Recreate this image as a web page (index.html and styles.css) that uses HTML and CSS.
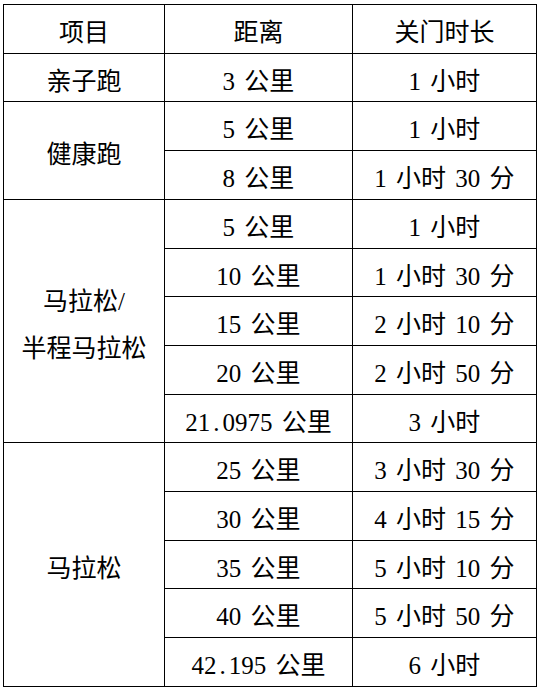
FILE: index.html
```html
<!DOCTYPE html>
<html lang="zh">
<head>
<meta charset="utf-8">
<link rel="stylesheet" href="styles.css">
</head>
<body>
<table class="tbl">
  <colgroup><col class="c1"><col class="c2"><col class="c3"></colgroup>
  <tr><td>项目</td><td>距离</td><td>关门时长</td></tr>
  <tr><td>亲子跑</td><td>3 公里</td><td>1 小时</td></tr>
  <tr><td rowspan="2">健康跑</td><td>5 公里</td><td>1 小时</td></tr>
  <tr><td>8 公里</td><td>1 小时 30 分</td></tr>
  <tr><td rowspan="5" class="two">马拉松/<br>半程马拉松</td><td>5 公里</td><td>1 小时</td></tr>
  <tr><td>10 公里</td><td>1 小时 30 分</td></tr>
  <tr><td>15 公里</td><td>2 小时 10 分</td></tr>
  <tr><td>20 公里</td><td>2 小时 50 分</td></tr>
  <tr><td>21<span class="dot">.</span>0975 公里</td><td>3 小时</td></tr>
  <tr><td rowspan="5">马拉松</td><td>25 公里</td><td>3 小时 30 分</td></tr>
  <tr><td>30 公里</td><td>4 小时 15 分</td></tr>
  <tr><td>35 公里</td><td>5 小时 10 分</td></tr>
  <tr><td>40 公里</td><td>5 小时 50 分</td></tr>
  <tr><td>42<span class="dot">.</span>195 公里</td><td>6 小时</td></tr>
</table>
</body>
</html>
```
FILE: styles.css
```css
html, body {
  margin: 0;
  padding: 0;
  background: #fff;
}
body {
  padding: 4px 0 0 3px;
}
.tbl {
  border-collapse: collapse;
  table-layout: fixed;
  width: 533px;
  font-family: "Liberation Serif", "Noto Sans CJK SC", serif;
  font-size: 25px;
  font-weight: 400;
  color: #000;
  word-spacing: 3px;
}
.c1 { width: 161px; }
.c2 { width: 188px; }
.c3 { width: 184px; }
.tbl td {
  border: 1.3px solid #000;
  padding: 8px 0 0;
  text-align: center;
  vertical-align: middle;
  line-height: 39.7px;
  white-space: nowrap;
}
.tbl td.two {
  line-height: 47px;
}
.dot {
  padding: 0 3px;
}
```
